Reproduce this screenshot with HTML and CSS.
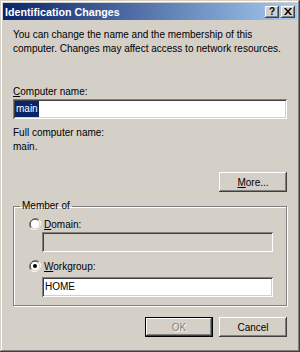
FILE: index.html
```html
<!DOCTYPE html>
<html lang="en">
<head>
    <meta charset="UTF-8">
    <title>Identification Changes</title>
    <link rel="stylesheet" href="styles.css">
</head>
<body>
    <div class="window">
        <div class="titlebar">
            <span class="title">Identification Changes</span>
            <div class="caption-buttons">
                <span class="cap-btn cap-help">?</span>
                <span class="cap-btn">
                    <svg width="8" height="7" viewBox="0 0 8 7">
                        <path d="M0 0h2l2 2.5L6 0h2L5 3.5 8 7H6L4 4.5 2 7H0l3-3.5z" fill="#000"/>
                    </svg>
                </span>
            </div>
        </div>

        <div class="dialog-body">
            <p class="intro">You can change the name and the membership of this<br>computer. Changes may affect access to network resources.</p>

            <div class="field-label"><u>C</u>omputer name:</div>
            <div class="textbox"><span class="selected">main</span></div>

            <div class="full-label">Full computer name:</div>
            <div class="full-value">main.</div>

            <div class="more-row">
                <span class="btn"><u>M</u>ore...</span>
            </div>

            <fieldset class="group">
                <legend>Member of</legend>
                <div class="radio-row">
                    <svg class="radio" width="12" height="12" viewBox="0 0 12 12">
                        <circle cx="6" cy="6" r="5.5" fill="#fff"/>
                        <path d="M1.8 10.2A6 6 0 0 1 10.2 1.8" fill="none" stroke="#808080" stroke-width="1"/>
                        <path d="M2.6 9.4A4.8 4.8 0 0 1 9.4 2.6" fill="none" stroke="#404040" stroke-width="1"/>
                        <path d="M10.2 1.8A6 6 0 0 1 1.8 10.2" fill="none" stroke="#fff" stroke-width="1"/>
                        <path d="M9.4 2.6A4.8 4.8 0 0 1 2.6 9.4" fill="none" stroke="#d4d0c8" stroke-width="1"/>
                    </svg>
                    <span><u>D</u>omain:</span>
                </div>
                <div class="textbox sub disabled"></div>

                <div class="radio-row workgroup-row">
                    <svg class="radio" width="12" height="12" viewBox="0 0 12 12">
                        <circle cx="6" cy="6" r="5.5" fill="#fff"/>
                        <path d="M1.8 10.2A6 6 0 0 1 10.2 1.8" fill="none" stroke="#808080" stroke-width="1"/>
                        <path d="M2.6 9.4A4.8 4.8 0 0 1 9.4 2.6" fill="none" stroke="#404040" stroke-width="1"/>
                        <path d="M10.2 1.8A6 6 0 0 1 1.8 10.2" fill="none" stroke="#fff" stroke-width="1"/>
                        <path d="M9.4 2.6A4.8 4.8 0 0 1 2.6 9.4" fill="none" stroke="#d4d0c8" stroke-width="1"/>
                        <circle cx="6" cy="6" r="2" fill="#000"/>
                    </svg>
                    <span><u>W</u>orkgroup:</span>
                </div>
                <div class="textbox sub">HOME</div>
            </fieldset>

            <div class="actions">
                <span class="btn default disabled">OK</span>
                <span class="btn">Cancel</span>
            </div>
        </div>
    </div>
</body>
</html>
```

FILE: styles.css
```css
:root {
    --face: #d4d0c8;
    --shadow: #808080;
    --dark: #404040;
    --light: #ffffff;
    --title-dark: #0a246a;
    --title-light: #a6caf0;
}

body {
    margin: 0;
    padding: 0;
    background-color: var(--face);
    font-family: 'Liberation Sans', Arial, sans-serif;
    font-size: 10px;
    color: #000;
}

.window {
    width: 300px;
    height: 352px;
    box-sizing: border-box;
    padding: 3px;
    background-color: var(--face);
    box-shadow: inset -1px -1px var(--dark), inset 1px 1px var(--face),
                inset -2px -2px var(--shadow), inset 2px 2px var(--light);
    display: flex;
    flex-direction: column;
}

.titlebar {
    height: 17px;
    background: linear-gradient(to right, var(--title-dark), var(--title-light));
    display: flex;
    align-items: center;
    justify-content: space-between;
    padding: 0 2px 0 2px;
}

.title {
    color: #fff;
    font-weight: bold;
    font-size: 10.7px;
}

.caption-buttons {
    display: flex;
    gap: 2px;
}

.cap-btn {
    width: 14px;
    height: 12px;
    box-sizing: border-box;
    background-color: var(--face);
    box-shadow: inset -1px -1px var(--dark), inset 1px 1px var(--light),
                inset -2px -2px var(--shadow);
    display: flex;
    align-items: center;
    justify-content: center;
    font-weight: bold;
    font-size: 10px;
    line-height: 12px;
}

.dialog-body {
    padding: 0 10px;
    display: flex;
    flex-direction: column;
}

.intro {
    margin: 8px 0 0 0;
    line-height: 14px;
}

.field-label {
    margin-top: 29px;
    line-height: 14px;
}

.textbox {
    height: 20px;
    box-sizing: border-box;
    padding: 2px 2px;
    background-color: #fff;
    box-shadow: inset 1px 1px var(--shadow), inset -1px -1px var(--light),
                inset 2px 2px var(--dark), inset -2px -2px var(--face);
    line-height: 16px;
    white-space: nowrap;
}

.textbox.sub {
    margin-left: 13px;
    padding-left: 3px;
}

.textbox.disabled {
    background-color: var(--face);
}

.selected {
    display: inline-block;
    background-color: var(--title-dark);
    color: #fff;
    padding: 0 1px;
}

.full-label {
    margin-top: 7px;
    line-height: 14px;
}

.full-value {
    line-height: 14px;
}

.more-row {
    margin-top: 18px;
    display: flex;
    justify-content: flex-end;
}

.btn {
    width: 68px;
    height: 20px;
    box-sizing: border-box;
    background-color: var(--face);
    box-shadow: inset -1px -1px var(--dark), inset 1px 1px var(--light),
                inset -2px -2px var(--shadow), inset 2px 2px var(--face);
    display: flex;
    align-items: center;
    justify-content: center;
}

.btn.default {
    border: 1px solid #000;
}

.btn.disabled {
    color: var(--shadow);
    text-shadow: 1px 1px 0 var(--light);
}

.group {
    margin: 7px 0 0 0;
    padding: 0 13px 8px 15px;
    border: 1px solid var(--shadow);
    box-shadow: inset 1px 1px var(--light), 1px 1px var(--light);
    min-width: 0;
}

.group legend {
    margin-left: -9px;
    padding: 0 2px;
    line-height: 14px;
}

.radio-row {
    display: flex;
    align-items: center;
    gap: 3px;
    height: 14px;
    margin-top: 4px;
    margin-bottom: 1px;
}

.workgroup-row {
    margin-top: 7px;
    margin-bottom: 4px;
}

.radio {
    flex-shrink: 0;
}

.actions {
    margin-top: 11px;
    display: flex;
    justify-content: flex-end;
    gap: 6px;
}
```
